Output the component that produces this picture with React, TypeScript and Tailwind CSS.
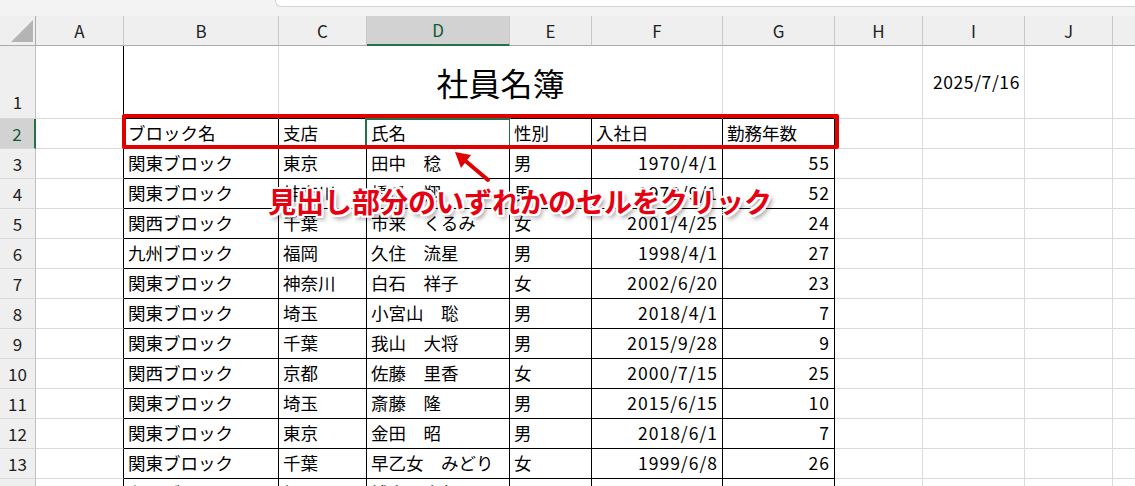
import React from 'react';

const COLS = ['A', 'B', 'C', 'D', 'E', 'F', 'G', 'H', 'I', 'J', 'K'];
const TABLE = ['B', 'C', 'D', 'E', 'F', 'G'];
const RIGHT_ALIGN = ['F', 'G'];

// rows 2..14, values for B..G
const rows: string[][] = [
  ['ブロック名', '支店', '氏名', '性別', '入社日', '勤務年数'],
  ['関東ブロック', '東京', '田中　稔', '男', '1970/4/1', '55'],
  ['関東ブロック', '神奈川', '橋爪　翔', '男', '1972/9/1', '52'],
  ['関西ブロック', '千葉', '市来　くるみ', '女', '2001/4/25', '24'],
  ['九州ブロック', '福岡', '久住　流星', '男', '1998/4/1', '27'],
  ['関東ブロック', '神奈川', '白石　祥子', '女', '2002/6/20', '23'],
  ['関東ブロック', '埼玉', '小宮山　聡', '男', '2018/4/1', '7'],
  ['関東ブロック', '千葉', '我山　大将', '男', '2015/9/28', '9'],
  ['関西ブロック', '京都', '佐藤　里香', '女', '2000/7/15', '25'],
  ['関東ブロック', '埼玉', '斎藤　隆', '男', '2015/6/15', '10'],
  ['関東ブロック', '東京', '金田　昭', '男', '2018/6/1', '7'],
  ['関東ブロック', '千葉', '早乙女　みどり', '女', '1999/6/8', '26'],
  ['九州ブロック', '福岡', '博多　太郎', '男', '2010/4/1', '15'],
];

// last column (K) is mostly off screen
const gridCols =
  'grid w-[1201px] grid-cols-[36px_88px_155px_88px_143px_82px_131px_112px_88px_102px_88px_88px]';

function ColumnHeader() {
  return (
    <div className={`${gridCols} h-[30px]`}>
      <div className="relative bg-[#efefef] border-r border-b border-[#ababab]">
        <svg className="absolute left-0 top-0" width="36" height="29" viewBox="0 0 36 29">
          <polygon points="33,4 33,26 11,26" fill="#b4b4b4" />
        </svg>
      </div>
      {COLS.map((c) => (
        <div
          key={c}
          className={`flex items-center justify-center text-[17px] border-r border-[#c8c8c8] ${
            c === 'D'
              ? 'bg-[#d2d2d2] border-b-2 border-b-[#217346] text-[#0f5c32]'
              : 'bg-[#efefef] border-b border-b-[#ababab] text-[#222]'
          }`}
        >
          {c}
        </div>
      ))}
    </div>
  );
}

function RowNum({ n, tall }: { n: number; tall?: boolean }) {
  const sel = n === 2;
  return (
    <div
      className={`flex justify-center text-[17px] border-b border-[#d8d8d8] ${
        tall ? 'items-end pb-[4px]' : 'items-center'
      } ${
        sel
          ? 'bg-[#d2d2d2] border-r-2 border-r-[#217346] text-[#0f5c32]'
          : 'bg-[#efefef] border-r border-r-[#c0c0c0] text-[#222]'
      }`}
    >
      {n}
    </div>
  );
}

function DataRow({ n, values }: { n: number; values: string[] }) {
  return (
    <div className={`${gridCols} h-[30px]`}>
      <RowNum n={n} />
      {COLS.map((c) => {
        const idx = TABLE.indexOf(c);
        const inTable = idx >= 0;
        const val = inTable ? values[idx] : '';
        const right = RIGHT_ALIGN.includes(c) && n > 2;
        let border = 'border-r border-b border-[#dadada]';
        if (inTable) border = 'border-r border-b border-black';
        else if (c === 'A') border = 'border-r border-b border-[#dadada] border-r-black';
        return (
          <div
            key={c}
            className={`relative flex items-center whitespace-nowrap overflow-visible text-[17.5px] text-black bg-white ${border} ${
              right ? 'justify-end pr-[4px] tracking-[1px]' : 'pl-[4px]'
            }`}
          >
            {val}
            {n === 2 && c === 'D' && (
              <>
                <div className="absolute -left-[2px] -top-[1px] -right-[2px] -bottom-[2px] border-2 border-[#217346]" />
                <div className="absolute -right-[4px] -bottom-[4px] w-[6px] h-[6px] bg-[#217346] border border-white" />
              </>
            )}
          </div>
        );
      })}
    </div>
  );
}

export default function App() {
  return (
    <div
      className="relative w-[1135px] h-[486px] overflow-hidden bg-white"
      style={{ fontFamily: '"Noto Sans CJK JP", "Noto Sans", sans-serif' }}
    >
      {/* formula bar remnant */}
      <div className="h-[16px] bg-[#f3f3f3] flex">
        <div className="w-[275px]" />
        <div className="flex-1 h-[8px] -mt-[1px] bg-white border-l border-b border-[#d4d4d4] rounded-bl-[6px]" />
      </div>

      <ColumnHeader />

      {/* row 1: title + date */}
      <div className={`${gridCols} h-[73px]`}>
        <RowNum n={1} tall />
        <div className="border-r border-b border-[#dadada] border-r-black" />
        <div className="border-r border-b border-[#dadada] border-b-black" />
        <div className="col-span-4 flex items-center justify-center text-[32px] text-black border-r border-b border-[#dadada] border-b-black">
          社員名簿
        </div>
        <div className="border-r border-b border-[#dadada] border-b-black" />
        <div className="border-r border-b border-[#dadada]" />
        <div className="flex items-center justify-end pr-[4px] tracking-[0.6px] text-[17.5px] text-black border-r border-b border-[#dadada]">
          2025/7/16
        </div>
        <div className="border-r border-b border-[#dadada]" />
        <div className="border-r border-b border-[#dadada]" />
      </div>

      {rows.map((v, i) => (
        <DataRow key={i} n={i + 2} values={v} />
      ))}

      {/* red highlight around the heading row */}
      <div className="absolute left-[122px] top-[114px] w-[717px] h-[35px] border-4 border-[#e00000] rounded-[2px]" />

      {/* arrow */}
      <svg className="absolute left-[440px] top-[140px]" width="60" height="50" viewBox="0 0 60 50">
        <line x1="48" y1="40" x2="25" y2="20.5" stroke="#e00000" strokeWidth="4" strokeLinecap="round" />
        <polygon points="15,12 31,15 21,28" fill="#e00000" />
      </svg>

      {/* annotation */}
      <div className="absolute left-[268px] top-[187px] leading-none text-[28px] font-bold text-[#e60012] whitespace-nowrap [text-shadow:2px_2px_0_#fff,-2px_-2px_0_#fff,2px_-2px_0_#fff,-2px_2px_0_#fff,0_2px_0_#fff,0_-2px_0_#fff,2px_0_0_#fff,-2px_0_0_#fff,3px_4px_5px_rgba(0,0,0,0.45)]">
        見出し部分のいずれかのセルをクリック
      </div>
    </div>
  );
}
